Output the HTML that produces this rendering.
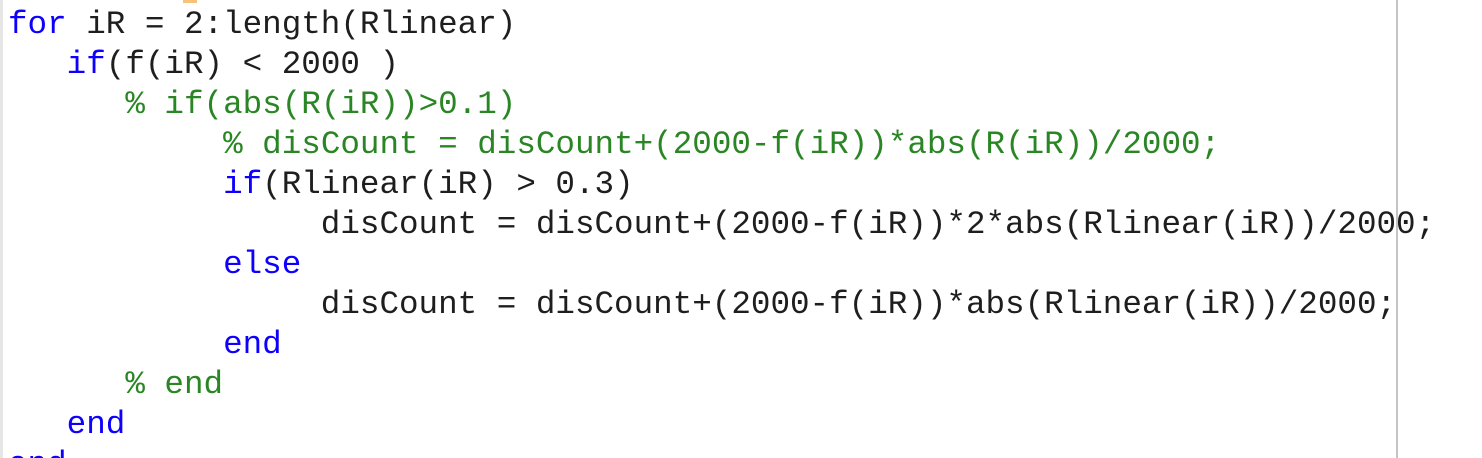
<!DOCTYPE html>
<html><head><style>
html,body{margin:0;padding:0;background:#fff;width:1482px;height:458px;overflow:hidden;position:relative}
.l{position:absolute;left:8px;top:5px;height:453px;overflow:hidden;white-space:pre;font-family:"Liberation Mono",monospace;font-size:32.6px;line-height:40px;color:#1e1e1e}
.k{color:#0e00ff}.c{color:#2a8624}
</style></head><body>
<div style="position:absolute;left:0;top:0;width:3px;height:458px;background:#e6e6e6"></div>
<div style="position:absolute;left:1396px;top:0;width:2px;height:458px;background:#c4c4c4"></div>
<div style="position:absolute;left:183px;top:0;width:14px;height:3px;background:#f6b35a;opacity:.8"></div>
<div class="l"><span class="k">for</span> iR = 2:length(Rlinear)
   <span class="k">if</span>(f(iR) &lt; 2000 )
      <span class="c">% if(abs(R(iR))&gt;0.1)</span>
           <span class="c">% disCount = disCount+(2000-f(iR))*abs(R(iR))/2000;</span>
           <span class="k">if</span>(Rlinear(iR) &gt; 0.3)
                disCount = disCount+(2000-f(iR))*2*abs(Rlinear(iR))/2000;
           <span class="k">else</span>
                disCount = disCount+(2000-f(iR))*abs(Rlinear(iR))/2000;
           <span class="k">end</span>
      <span class="c">% end</span>
   <span class="k">end</span>
<span class="k">end</span></div>
</body></html>
